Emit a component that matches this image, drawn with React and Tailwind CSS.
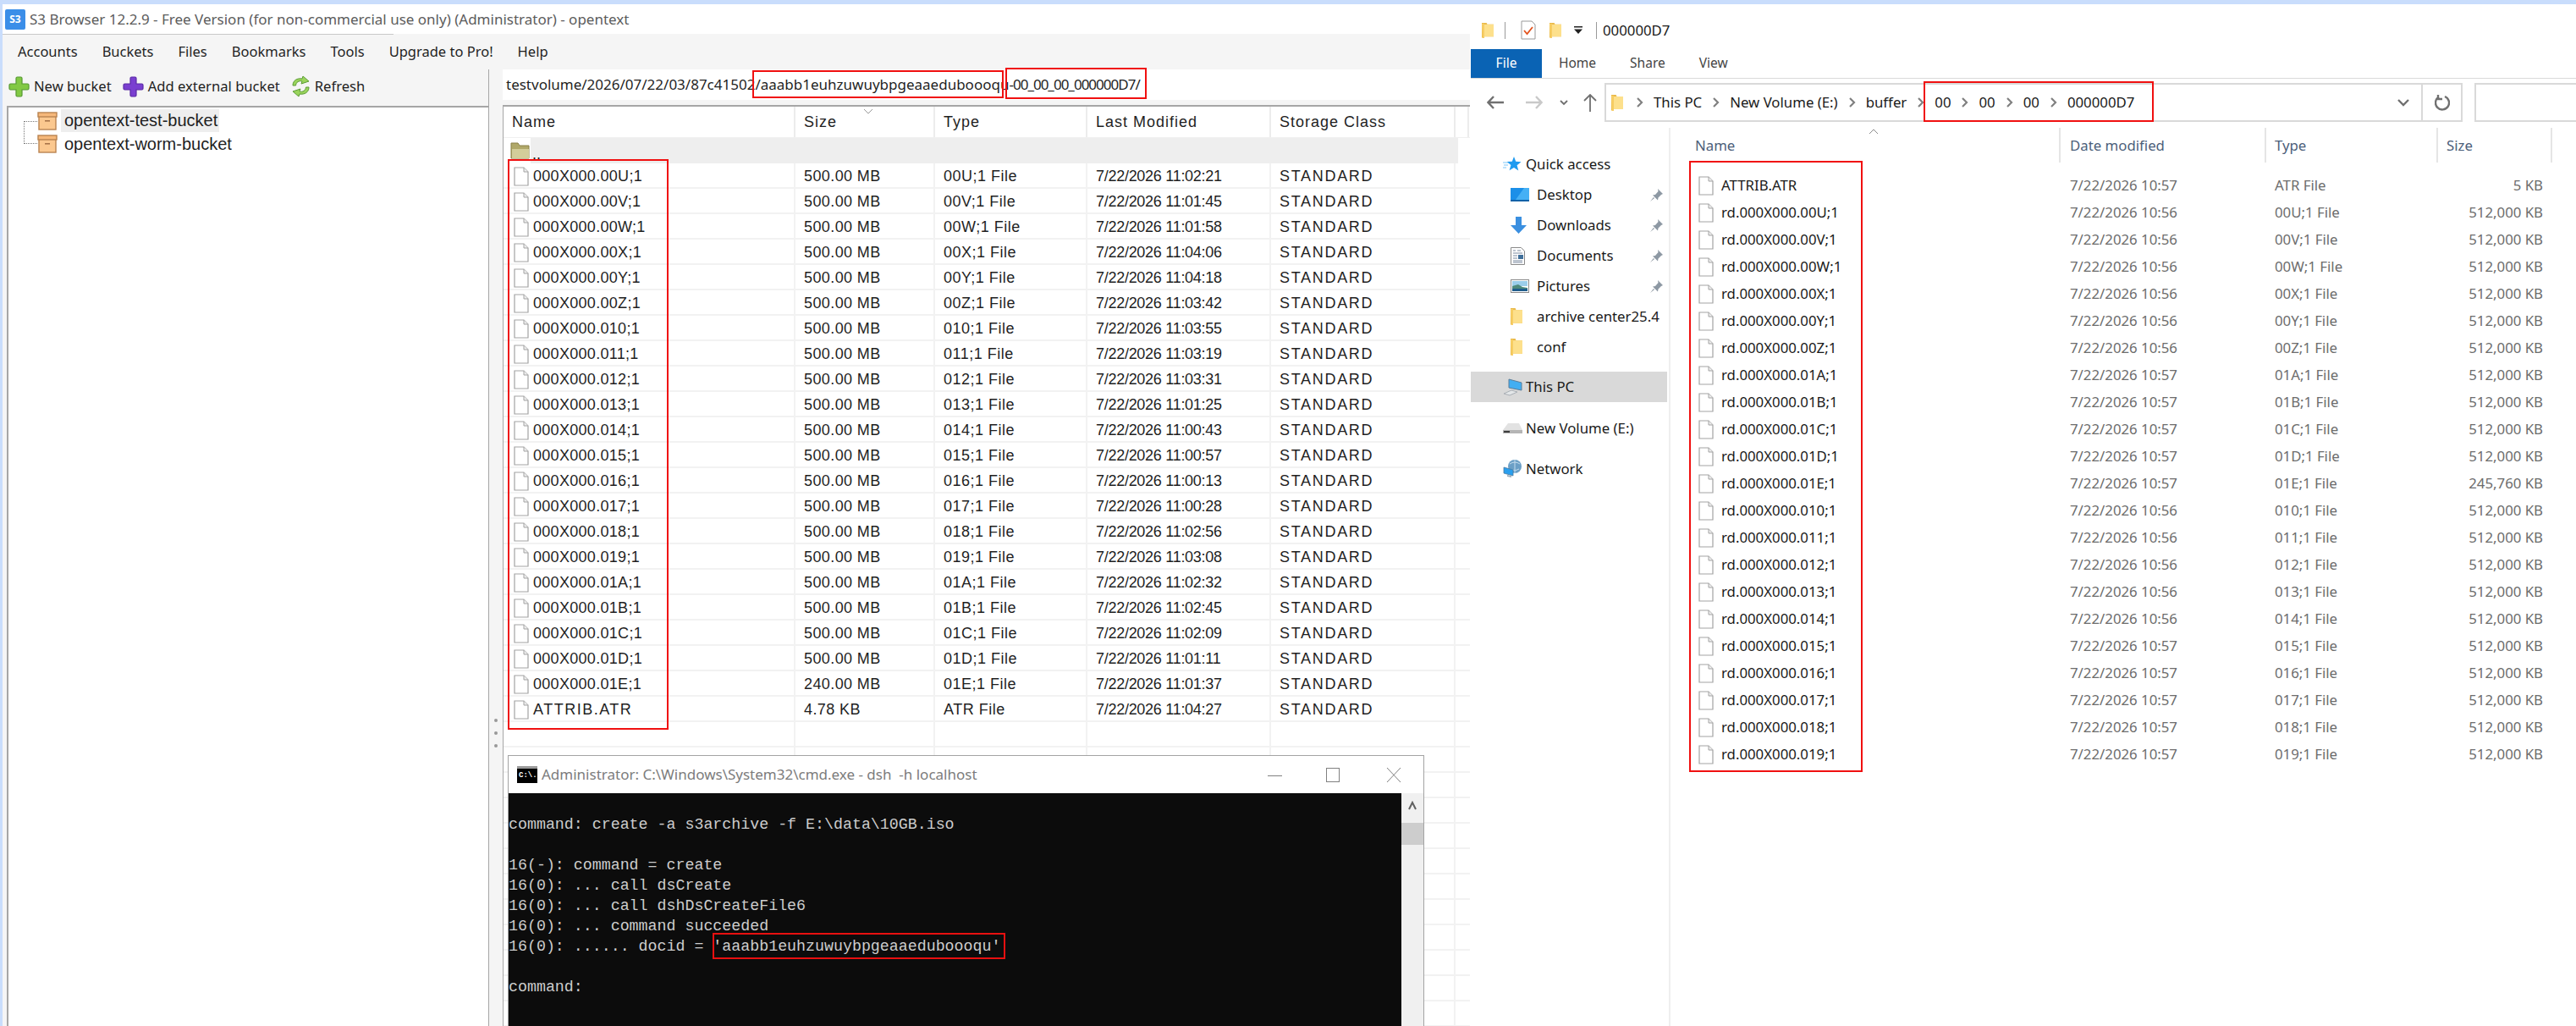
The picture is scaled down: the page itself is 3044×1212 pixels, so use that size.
import React from "react";

const s3Rows = [
  ["000X000.00U;1", "500.00 MB", "00U;1 File", "7/22/2026 11:02:21"],
  ["000X000.00V;1", "500.00 MB", "00V;1 File", "7/22/2026 11:01:45"],
  ["000X000.00W;1", "500.00 MB", "00W;1 File", "7/22/2026 11:01:58"],
  ["000X000.00X;1", "500.00 MB", "00X;1 File", "7/22/2026 11:04:06"],
  ["000X000.00Y;1", "500.00 MB", "00Y;1 File", "7/22/2026 11:04:18"],
  ["000X000.00Z;1", "500.00 MB", "00Z;1 File", "7/22/2026 11:03:42"],
  ["000X000.010;1", "500.00 MB", "010;1 File", "7/22/2026 11:03:55"],
  ["000X000.011;1", "500.00 MB", "011;1 File", "7/22/2026 11:03:19"],
  ["000X000.012;1", "500.00 MB", "012;1 File", "7/22/2026 11:03:31"],
  ["000X000.013;1", "500.00 MB", "013;1 File", "7/22/2026 11:01:25"],
  ["000X000.014;1", "500.00 MB", "014;1 File", "7/22/2026 11:00:43"],
  ["000X000.015;1", "500.00 MB", "015;1 File", "7/22/2026 11:00:57"],
  ["000X000.016;1", "500.00 MB", "016;1 File", "7/22/2026 11:00:13"],
  ["000X000.017;1", "500.00 MB", "017;1 File", "7/22/2026 11:00:28"],
  ["000X000.018;1", "500.00 MB", "018;1 File", "7/22/2026 11:02:56"],
  ["000X000.019;1", "500.00 MB", "019;1 File", "7/22/2026 11:03:08"],
  ["000X000.01A;1", "500.00 MB", "01A;1 File", "7/22/2026 11:02:32"],
  ["000X000.01B;1", "500.00 MB", "01B;1 File", "7/22/2026 11:02:45"],
  ["000X000.01C;1", "500.00 MB", "01C;1 File", "7/22/2026 11:02:09"],
  ["000X000.01D;1", "500.00 MB", "01D;1 File", "7/22/2026 11:01:11"],
  ["000X000.01E;1", "240.00 MB", "01E;1 File", "7/22/2026 11:01:37"],
  ["ATTRIB.ATR", "4.78 KB", "ATR File", "7/22/2026 11:04:27"],
];

const explorerRows = [
  ["ATTRIB.ATR", "7/22/2026 10:57", "ATR File", "5 KB"],
  ["rd.000X000.00U;1", "7/22/2026 10:56", "00U;1 File", "512,000 KB"],
  ["rd.000X000.00V;1", "7/22/2026 10:56", "00V;1 File", "512,000 KB"],
  ["rd.000X000.00W;1", "7/22/2026 10:56", "00W;1 File", "512,000 KB"],
  ["rd.000X000.00X;1", "7/22/2026 10:56", "00X;1 File", "512,000 KB"],
  ["rd.000X000.00Y;1", "7/22/2026 10:56", "00Y;1 File", "512,000 KB"],
  ["rd.000X000.00Z;1", "7/22/2026 10:56", "00Z;1 File", "512,000 KB"],
  ["rd.000X000.01A;1", "7/22/2026 10:57", "01A;1 File", "512,000 KB"],
  ["rd.000X000.01B;1", "7/22/2026 10:57", "01B;1 File", "512,000 KB"],
  ["rd.000X000.01C;1", "7/22/2026 10:57", "01C;1 File", "512,000 KB"],
  ["rd.000X000.01D;1", "7/22/2026 10:57", "01D;1 File", "512,000 KB"],
  ["rd.000X000.01E;1", "7/22/2026 10:57", "01E;1 File", "245,760 KB"],
  ["rd.000X000.010;1", "7/22/2026 10:56", "010;1 File", "512,000 KB"],
  ["rd.000X000.011;1", "7/22/2026 10:56", "011;1 File", "512,000 KB"],
  ["rd.000X000.012;1", "7/22/2026 10:56", "012;1 File", "512,000 KB"],
  ["rd.000X000.013;1", "7/22/2026 10:56", "013;1 File", "512,000 KB"],
  ["rd.000X000.014;1", "7/22/2026 10:56", "014;1 File", "512,000 KB"],
  ["rd.000X000.015;1", "7/22/2026 10:57", "015;1 File", "512,000 KB"],
  ["rd.000X000.016;1", "7/22/2026 10:57", "016;1 File", "512,000 KB"],
  ["rd.000X000.017;1", "7/22/2026 10:57", "017;1 File", "512,000 KB"],
  ["rd.000X000.018;1", "7/22/2026 10:57", "018;1 File", "512,000 KB"],
  ["rd.000X000.019;1", "7/22/2026 10:57", "019;1 File", "512,000 KB"],
];

const consoleLines = [
  "command: create -a s3archive -f E:\\data\\10GB.iso",
  "",
  "16(-): command = create",
  "16(0): ... call dsCreate",
  "16(0): ... call dshDsCreateFile6",
  "16(0): ... command succeeded",
  "16(0): ...... docid = 'aaabb1euhzuwuybpgeaaeduboooqu'",
  "",
  "command:",
];

const S3_COLS = "grid grid-cols-[345px_165px_180px_217px_218px_16px]";
const S3_CELL = "h-full flex items-center pt-[2px] pl-[10px] border-r-2 border-[#f2f2f2]";

function PlusIcon({ fill, stroke }) {
  return (
    <svg width="25" height="25" viewBox="0 0 25 25" className="shrink-0">
      <path
        d="M9 2.5Q9 1 10.5 1h4Q16 1 16 2.5V9h6.5Q24 9 24 10.5v4q0 1.5-1.5 1.5H16v6.5q0 1.5-1.5 1.5h-4Q9 24 9 22.5V16H2.5Q1 16 1 14.5v-4Q1 9 2.5 9H9z"
        fill={fill}
        stroke={stroke}
        strokeWidth="1.2"
      />
    </svg>
  );
}

function RefreshGreen() {
  return (
    <svg width="25" height="26" viewBox="0 0 25 26" className="shrink-0">
      <path d="M3 12C3 6 8 3 14 4l1-3 7 6-9 3 1-3C10 6 7 8 6.5 12z" fill="#9ad45c" stroke="#5c9c36" strokeWidth="1" />
      <path d="M22 14c0 6-5 9-11 8l-1 3-7-6 9-3-1 3c4 1 7-1 7.500-5z" fill="#9ad45c" stroke="#5c9c36" strokeWidth="1" />
    </svg>
  );
}

function BoxIcon() {
  return (
    <svg width="24" height="22" viewBox="0 0 24 22" className="shrink-0">
      <rect x="2" y="5" width="20" height="16" fill="#fbc88f" stroke="#b98350" strokeWidth="1.4" />
      <rect x="1" y="1" width="22" height="5" fill="#f6b87a" stroke="#b98350" strokeWidth="1.4" />
      <rect x="9" y="10" width="6" height="1.6" fill="#a8744a" />
    </svg>
  );
}

function FileIcon() {
  return (
    <svg width="18" height="23" viewBox="0 0 18 23" className="shrink-0">
      <path d="M1 1h11l5 5v16H1z" fill="#fff" stroke="#a3a3a3" strokeWidth="1.2" />
      <path d="M12 1v5h5" fill="#eee" stroke="#a3a3a3" strokeWidth="1" />
    </svg>
  );
}

function FolderIcon({ width = 15, height = 21 }) {
  return (
    <svg width={width} height={height} viewBox="0 0 15 21" className="shrink-0" preserveAspectRatio="none">
      <path d="M0 1h6l1 2h8v15H3v2H1l-1-1z" fill="#e9b949" />
      <path d="M3 3h12v15H3z" fill="#fde08c" />
      <path d="M0 2h3v18H1z" fill="#f8cf66" />
    </svg>
  );
}

function OldFolder() {
  return (
    <svg width="23" height="20" viewBox="0 0 23 20" className="shrink-0">
      <path d="M1 1h8l2 3h11v15H1z" fill="#b0a869" stroke="#8a8048" strokeWidth="1" />
      <path d="M2 8h20v11H2z" fill="#d3cd9a" />
    </svg>
  );
}

function Chevron({ color = "#808080" }) {
  return (
    <svg width="9" height="14" viewBox="0 0 9 14" className="shrink-0">
      <path d="M2 2l5 5-5 5" fill="none" stroke={color} strokeWidth="2.2" />
    </svg>
  );
}

function Pin() {
  return (
    <svg width="17" height="17" viewBox="0 0 17 17" className="shrink-0">
      <path d="M10 1l6 6-2 1-3.500 3.500-.5 3-6-6 3-.5L10.500 4z" fill="#8d98a3" />
      <path d="M5 11l-4 5 5-4z" fill="#8d98a3" />
    </svg>
  );
}

function StarIcon() {
  return (
    <svg width="22" height="20" viewBox="0 0 22 20" className="shrink-0">
      <path d="M13 1l2.200 5.800 6.300.4-4.900 4 1.700 6.300-5.300-3.600-5.400 3.400 1.800-6.200-4.800-4 6.200-.3z" fill="#1f9bf0" />
      <path d="M0 8h6M1 11h5M0 14h4" stroke="#7fc7f7" strokeWidth="1" />
    </svg>
  );
}

function DesktopIcon() {
  return (
    <svg width="22" height="16" viewBox="0 0 22 16" className="shrink-0">
      <rect width="22" height="16" fill="#1b8fe8" />
      <path d="M16 0h6v14H6z" fill="#45b0f5" />
      <rect y="14" width="22" height="2" fill="#1262a8" />
    </svg>
  );
}

function DownloadIcon() {
  return (
    <svg width="19" height="20" viewBox="0 0 19 20" className="shrink-0">
      <path d="M6 0h7v10h6l-9.500 10L0 10h6z" fill="#3a8fe0" />
    </svg>
  );
}

function DocumentsIcon() {
  return (
    <svg width="17" height="21" viewBox="0 0 17 21" className="shrink-0">
      <path d="M.5.5h12l4 4v16H.5z" fill="#fff" stroke="#8a8a8a" />
      <path d="M3 4h3M8 4h4M3 7h11M3 10h5M3 13h5M3 16h11M3 18h11" stroke="#7a8aa0" strokeWidth="1" />
      <rect x="9" y="9" width="6" height="5" fill="#3f6f9a" />
    </svg>
  );
}

function PicturesIcon() {
  return (
    <svg width="22" height="16" viewBox="0 0 22 16" className="shrink-0">
      <rect x=".5" y=".5" width="21" height="15" fill="#fff" stroke="#8a8a8a" />
      <rect x="2" y="2" width="18" height="6" fill="#9bcdea" />
      <path d="M2 8l7-2 5 3 6 1v4H2z" fill="#4f8a7c" />
      <rect x="2" y="11" width="18" height="3" fill="#1f5d8c" />
    </svg>
  );
}

function ThisPcIcon() {
  return (
    <svg width="23" height="21" viewBox="0 0 23 21" className="shrink-0">
      <path d="M7 1l15 4v9L7 11z" fill="#42aef2" stroke="#5a7d99" strokeWidth="1" />
      <path d="M1 18l9-4 7 2-9 4z" fill="#e3e6e8" stroke="#a9afb5" strokeWidth="1" />
    </svg>
  );
}

function DriveIcon() {
  return (
    <svg width="23" height="14" viewBox="0 0 23 14" className="shrink-0">
      <path d="M6 1h13l4 8H0z" fill="#e2e2e2" />
      <path d="M0 9h23v4H0z" fill="#b5b5b5" />
      <rect x="1" y="10" width="7" height="2" fill="#3d3d3d" />
    </svg>
  );
}

function NetworkIcon() {
  return (
    <svg width="22" height="22" viewBox="0 0 22 22" className="shrink-0">
      <circle cx="14" cy="8" r="8" fill="#6b9fc6" />
      <path d="M8 5q6-4 12 0M10 12q5 2 9-1M14 0v16" stroke="#c2dbec" strokeWidth="1" fill="none" />
      <path d="M1 9l11 3v7L1 16z" fill="#2a9fee" stroke="#4c7a9e" strokeWidth=".8" />
      <path d="M5 18l5 1v2l-5-1z" fill="#9fb0bd" />
    </svg>
  );
}

function CheckDoc() {
  return (
    <svg width="18" height="23" viewBox="0 0 18 23" className="shrink-0">
      <path d="M1 1h12l4 4v17H1z" fill="#fff" stroke="#9a9a9a" />
      <path d="M4 12l3.500 4L14 8" fill="none" stroke="#e2521c" strokeWidth="1.800" />
    </svg>
  );
}

function ExplorerFile({ name, date, type, size }) {
  return (
    <div className="grid grid-cols-[461px_243px_203px_135px] h-[32px] items-center text-[#6d6d6d]">
      <div className="flex items-center pl-[33px] gap-[9px] text-[#1a1a1a]">
        <FileIcon />
        <span>{name}</span>
      </div>
      <div className="pl-[11px]">{date}</div>
      <div className="pl-[10px]">{type}</div>
      <div className="pr-[11px] text-right">{size}</div>
    </div>
  );
}

function NavItem({ icon, label, pin }) {
  return (
    <div className="flex items-center h-[36px] pl-[47px]">
      <div className="w-[31px] flex">{icon}</div>
      <span>{label}</span>
      {pin && <div className="ml-auto mr-[6px]"><Pin /></div>}
    </div>
  );
}

function RootItem({ icon, label, className }) {
  return (
    <div className={`flex items-center h-[36px] pl-[38px] ${className}`}>
      <div className="w-[27px] flex">{icon}</div>
      <span>{label}</span>
    </div>
  );
}

function S3Browser() {
  return (
    <div className="w-[1737px] shrink-0 flex flex-col border-l-[3px] border-[#c9ddfc] font-['Liberation_Sans',sans-serif] text-[#1f1f1f] text-[18px]">
      {/* title bar */}
      <div className="h-[35px] shrink-0 bg-white flex items-center pl-[3px] text-[#5c5c5c] font-['Noto_Sans',sans-serif] text-[17px]">
        <div className="w-[24px] h-[24px] rounded-[2px] bg-[#3b8ee8] text-white text-[12px] font-bold flex items-center justify-center mr-[5px]">S3</div>
        <span>S3 Browser 12.2.9 - Free Version (for non-commercial use only) (Administrator) - opentext</span>
      </div>
      {/* menu */}
      <div className="h-[42px] shrink-0 bg-[#f5f5f5] relative flex items-center pl-[18px] gap-[29px] font-['Noto_Sans',sans-serif] text-[16.5px]">
        <div className="absolute left-0 top-0 w-[462px] h-px bg-[#c8c8c8]" />
        {["Accounts", "Buckets", "Files", "Bookmarks", "Tools", "Upgrade to Pro!", "Help"].map((m) => (
          <span key={m}>{m}</span>
        ))}
      </div>
      <div className="flex-1 flex min-h-0 bg-[#f5f5f5]">
        {/* buckets */}
        <div className="w-[575px] shrink-0 flex flex-col border-r border-[#a6a6a6]">
          <div className="h-[43px] shrink-0 flex items-center pl-[7px] pb-[3px] font-['Noto_Sans',sans-serif] text-[16.6px]">
            <PlusIcon fill="#82c944" stroke="#569a33" />
            <span className="ml-[5px]">New bucket</span>
            <div className="ml-[13px]"><PlusIcon fill="#7a3fd0" stroke="#5a2aa5" /></div>
            <span className="ml-[5px]">Add external bucket</span>
            <div className="ml-[12px]"><RefreshGreen /></div>
            <span className="ml-[4px]">Refresh</span>
          </div>
          <div className="flex-1 ml-[5px] bg-white border-t-2 border-l-2 border-[#a6a6a6] pt-[2px] relative text-[20px]">
            <div className="flex items-center h-[27px] pl-[34px]">
              <BoxIcon />
              <span className="ml-[4px] pl-[4px] pr-[2px] bg-[#eeeeee] h-[27px] leading-[27px]">opentext-test-bucket</span>
            </div>
            <div className="flex items-center h-[27px] pl-[34px]">
              <BoxIcon />
              <span className="ml-[4px] pl-[4px] pr-[2px]">opentext-worm-bucket</span>
            </div>
            <div className="absolute left-[18px] top-[16px] w-[16px] h-[27px] border-l border-t border-b border-dotted border-[#777]" />
          </div>
        </div>
        {/* splitter */}
        <div className="w-[16px] shrink-0 flex flex-col items-center pt-[767px] gap-[11px]">
          <div className="w-[4px] h-[4px] rounded-full bg-[#999]" />
          <div className="w-[4px] h-[4px] rounded-full bg-[#999]" />
          <div className="w-[4px] h-[4px] rounded-full bg-[#999]" />
        </div>
        {/* objects */}
        <div className="flex-1 flex flex-col relative min-w-0">
          <div className="h-[36px] shrink-0 bg-white flex items-center pl-[4px] text-[17px] font-['Noto_Sans',sans-serif] whitespace-pre">
            <span>testvolume/2026/07/22/03/87c41502/aaabb1euhzuwuybpgeaaeduboooqu</span>
            <span className="tracking-[-1px]">-00_00_00_000000D7/</span>
          </div>
          <div className="h-[8px] shrink-0 border-b-2 border-[#a6a6a6]" />
          <div className="flex-1 bg-white border-l border-[#a6a6a6] overflow-hidden relative">
            <div className={`${S3_COLS} h-[37px] items-center border-b border-[#f0f0f0] tracking-[1px]`}>
              {["Name", "Size", "Type", "Last Modified", "Storage Class", ""].map((h) => (
                <div key={h} className="h-full flex items-center pl-[10px] border-r-2 border-[#ececec]">{h}</div>
              ))}
            </div>
            <div className="flex h-[30px] pl-[8px]">
              <div className="mt-[5px]"><OldFolder /></div>
              <div className="flex-1 h-full bg-[#eeeeee] ml-[1px] mr-[14px] pl-[2px] pb-[2px] flex items-end leading-none">..</div>
            </div>
            {s3Rows.map((r) => (
              <div key={r[0]} className={`${S3_COLS} h-[30px] items-center border-b-2 border-[#f2f2f2]`}>
                <div className="h-full flex items-center pt-[2px] pl-[12px] gap-[5px] border-r-2 border-[#f2f2f2]">
                  <FileIcon />
                  <span className={r[0] === "ATTRIB.ATR" ? "tracking-[1.5px]" : "tracking-[0.3px]"}>{r[0]}</span>
                </div>
                <div className={`${S3_CELL} tracking-[0.4px]`}>{r[1]}</div>
                <div className={`${S3_CELL} tracking-[0.5px]`}>{r[2]}</div>
                <div className={`${S3_CELL} tracking-[-0.28px]`}>{r[3]}</div>
                <div className={`${S3_CELL} tracking-[1.7px]`}>STANDARD</div>
              </div>
            ))}
            {Array.from({ length: 12 }).map((_, i) => (
              <div key={i} className={`${S3_COLS} h-[30px] border-b-2 border-[#f2f2f2]`}>
                <div className="border-r-2 border-[#f2f2f2]" />
                <div className="border-r-2 border-[#f2f2f2]" />
                <div className="border-r-2 border-[#f2f2f2]" />
                <div className="border-r-2 border-[#f2f2f2]" />
                <div className="border-r-2 border-[#f2f2f2]" />
              </div>
            ))}
            {/* sort caret */}
            <svg width="12" height="7" viewBox="0 0 12 7" className="absolute left-[425px] top-[2px]">
              <path d="M1 1l5 5 5-5" fill="none" stroke="#9a9a9a" strokeWidth="1" />
            </svg>
            {/* names annotation */}
            <div className="absolute left-[5px] top-[62px] w-[190px] h-[674px] border-2 border-[#f01010]" />
          </div>
          {/* path annotations */}
          <div className="absolute left-[295px] top-[1px] w-[297px] h-[33px] border-2 border-[#f01010]" />
          <div className="absolute left-[594px] top-[-2px] w-[167px] h-[37px] border-2 border-[#f01010]" />
          <CmdWindow />
        </div>
      </div>
    </div>
  );
}

function CmdWindow() {
  return (
    <div className="absolute left-[6px] top-[810px] w-[1083px] bottom-0 flex flex-col bg-white border-t border-l border-r border-[#a3a3a3]">
      <div className="h-[44px] shrink-0 flex items-center pl-[10px] text-[#7c7c7c] font-['Noto_Sans',sans-serif] text-[17px]">
        <div className="w-[24px] h-[20px] bg-black border-t-[3px] border-[#9a9a9a] text-white text-[9px] leading-[16px] font-bold font-['Liberation_Mono',monospace] mr-[5px] pl-[2px]">C:\.</div>
        <span className="whitespace-pre">Administrator: C:\Windows\System32\cmd.exe - dsh  -h localhost</span>
        <svg width="160" height="20" viewBox="0 0 160 20" className="ml-auto mr-[24px]">
          <path d="M0 11.500h17" stroke="#808080" strokeWidth="1" />
          <rect x="69.500" y="2.500" width="15" height="16" fill="none" stroke="#808080" />
          <path d="M141 2l16 17M157 2l-16 17" stroke="#808080" strokeWidth="1" />
        </svg>
      </div>
      <div className="flex-1 flex min-h-0">
        <div className="flex-1 bg-[#0c0c0c] text-[#cccccc] pt-[25px] relative font-['Liberation_Mono',monospace] text-[18.3px] leading-[24px] whitespace-pre">
          {consoleLines.map((l, i) => (
            <div key={i} className="h-[24px]">{l}</div>
          ))}
          <div className="absolute left-[241px] top-[165px] w-[346px] h-[31px] border-2 border-[#e81010]" />
        </div>
        <div className="w-[26px] shrink-0 bg-[#f0f0f0] flex flex-col items-center pt-[9px]">
          <svg width="12" height="12" viewBox="0 0 12 12">
            <path d="M2 10l4-8 4 8" fill="none" stroke="#606060" strokeWidth="2" />
          </svg>
          <div className="w-full h-[26px] mt-[14px] bg-[#cdcdcd]" />
        </div>
      </div>
    </div>
  );
}

function Explorer() {
  return (
    <div className="flex-1 min-w-0 bg-white flex flex-col font-['Noto_Sans',sans-serif] text-[16.800px] text-[#1a1a1a] pl-[1px]">
      <div className="h-[53px] shrink-0 flex items-center pl-[13px] pt-[8px]">
        <FolderIcon width={14} height={20} />
        <div className="w-px h-[20px] bg-[#9a9a9a] ml-[13px]" />
        <div className="ml-[18px]"><CheckDoc /></div>
        <div className="ml-[16px]"><FolderIcon width={14} height={20} /></div>
        <svg width="10" height="9" viewBox="0 0 10 9" className="ml-[15px]">
          <path d="M0 0h10v1.500H0zM0 3.500h10L5 9z" fill="#222" />
        </svg>
        <div className="w-px h-[20px] bg-[#9a9a9a] ml-[16px]" />
        <span className="ml-[7px]">000000D7</span>
      </div>
      <div className="h-[35px] shrink-0 flex items-stretch border-b border-[#d9d9d9] text-[15.500px] text-[#444]">
        <div className="w-[84px] bg-[#0a63b4] text-white flex items-center justify-center">File</div>
        <div className="flex items-center ml-[20px]">Home</div>
        <div className="flex items-center ml-[40px]">Share</div>
        <div className="flex items-center ml-[40px]">View</div>
      </div>
      {/* nav row */}
      <div className="h-[58px] shrink-0 flex pt-[5px] relative">
        <div className="w-[158px] shrink-0 flex items-center h-[46px] pl-[19px]">
          <svg width="20" height="16" viewBox="0 0 20 16"><path d="M8 1L1.500 8 8 15M2 8h18" fill="none" stroke="#707070" strokeWidth="2.400" /></svg>
          <svg width="20" height="16" viewBox="0 0 20 16" className="ml-[26px]"><path d="M12 1l6.500 7L12 15M18 8H0" fill="none" stroke="#c9c9c9" strokeWidth="2.400" /></svg>
          <svg width="10" height="7" viewBox="0 0 10 7" className="ml-[20px]"><path d="M1 1l4 4 4-4" fill="none" stroke="#707070" strokeWidth="1.800" /></svg>
          <svg width="16" height="21" viewBox="0 0 16 21" className="ml-[18px]"><path d="M1 8l7-7 7 7M8 1v20" fill="none" stroke="#707070" strokeWidth="1.800" /></svg>
        </div>
        <div className="w-[1014px] shrink-0 h-[46px] border-2 border-[#d9d9d9] flex items-center pl-[6px]">
          <FolderIcon width={14} height={21} />
          <div className="ml-[15px] mr-[12px]"><Chevron /></div>
          <span>This PC</span>
          <div className="mx-[12px]"><Chevron /></div>
          <span>New Volume (E:)</span>
          <div className="mx-[12px]"><Chevron /></div>
          <span>buffer</span>
          <div className="mx-[12px]"><Chevron /></div>
          <span>00</span>
          <div className="mx-[12px]"><Chevron /></div>
          <span>00</span>
          <div className="mx-[12px]"><Chevron /></div>
          <span>00</span>
          <div className="mx-[12px]"><Chevron /></div>
          <span>000000D7</span>
          <svg width="14" height="9" viewBox="0 0 14 9" className="ml-auto mr-[14px]"><path d="M1 1l6 6 6-6" fill="none" stroke="#707070" strokeWidth="2.400" /></svg>
          <div className="w-[47px] h-full border-l-2 border-[#d9d9d9] flex items-center justify-center">
            <svg width="18" height="20" viewBox="0 0 18 20"><path d="M5 3.500A8 8 0 1 0 12 3M4 1v5h5" fill="none" stroke="#707070" strokeWidth="2.400" /></svg>
          </div>
        </div>
        <div className="ml-[14px] flex-1 h-[46px] border-2 border-r-0 border-[#d9d9d9]" />
        {/* breadcrumb annotation */}
        <div className="absolute left-[535px] top-[3px] w-[272px] h-[48px] border-2 border-[#f01010]" />
      </div>
      <div className="flex-1 flex min-h-0">
        <div className="w-[236px] shrink-0 pt-[25px] border-r-2 border-[#efefef]">
          <RootItem icon={<StarIcon />} label="Quick access" />
          <NavItem icon={<DesktopIcon />} label="Desktop" pin />
          <NavItem icon={<DownloadIcon />} label="Downloads" pin />
          <NavItem icon={<DocumentsIcon />} label="Documents" pin />
          <NavItem icon={<PicturesIcon />} label="Pictures" pin />
          <NavItem icon={<FolderIcon width={14} height={22} />} label="archive center25.4" />
          <NavItem icon={<FolderIcon width={14} height={22} />} label="conf" />
          <RootItem icon={<ThisPcIcon />} label="This PC" className="mt-[11px] mr-[2px] bg-[#d9d9d9]" />
          <RootItem icon={<DriveIcon />} label="New Volume (E:)" className="mt-[13px]" />
          <RootItem icon={<NetworkIcon />} label="Network" className="mt-[12px]" />
        </div>
        <div className="flex-1 min-w-0 relative">
          <div className="grid grid-cols-[461px_243px_203px_135px] h-[41px] items-center text-[#4c607a]">
            <div className="h-full flex items-center pl-[29px] border-r-2 border-[#e5e5e5]">Name</div>
            <div className="h-full flex items-center pl-[11px] border-r-2 border-[#e5e5e5]">Date modified</div>
            <div className="h-full flex items-center pl-[10px] border-r-2 border-[#e5e5e5]">Type</div>
            <div className="h-full flex items-center pl-[10px] border-r-2 border-[#e5e5e5]">Size</div>
          </div>
          <svg width="12" height="7" viewBox="0 0 12 7" className="absolute left-[234px] top-[1px]">
            <path d="M1 6l5-5 5 5" fill="none" stroke="#8a8a8a" strokeWidth="1" />
          </svg>
          <div className="pt-[11px]">
            {explorerRows.map((r) => (
              <ExplorerFile key={r[0]} name={r[0]} date={r[1]} type={r[2]} size={r[3]} />
            ))}
          </div>
          {/* names annotation */}
          <div className="absolute left-[22px] top-[39px] w-[205px] h-[722px] border-2 border-[#f01010]" />
        </div>
      </div>
    </div>
  );
}

export default function App() {
  return (
    <div className="w-[3044px] h-[1212px] overflow-hidden bg-white flex flex-col">
      <div className="h-[5px] shrink-0 bg-[#c9ddfc]" />
      <div className="flex-1 flex min-h-0">
        <S3Browser />
        <Explorer />
      </div>
    </div>
  );
}
